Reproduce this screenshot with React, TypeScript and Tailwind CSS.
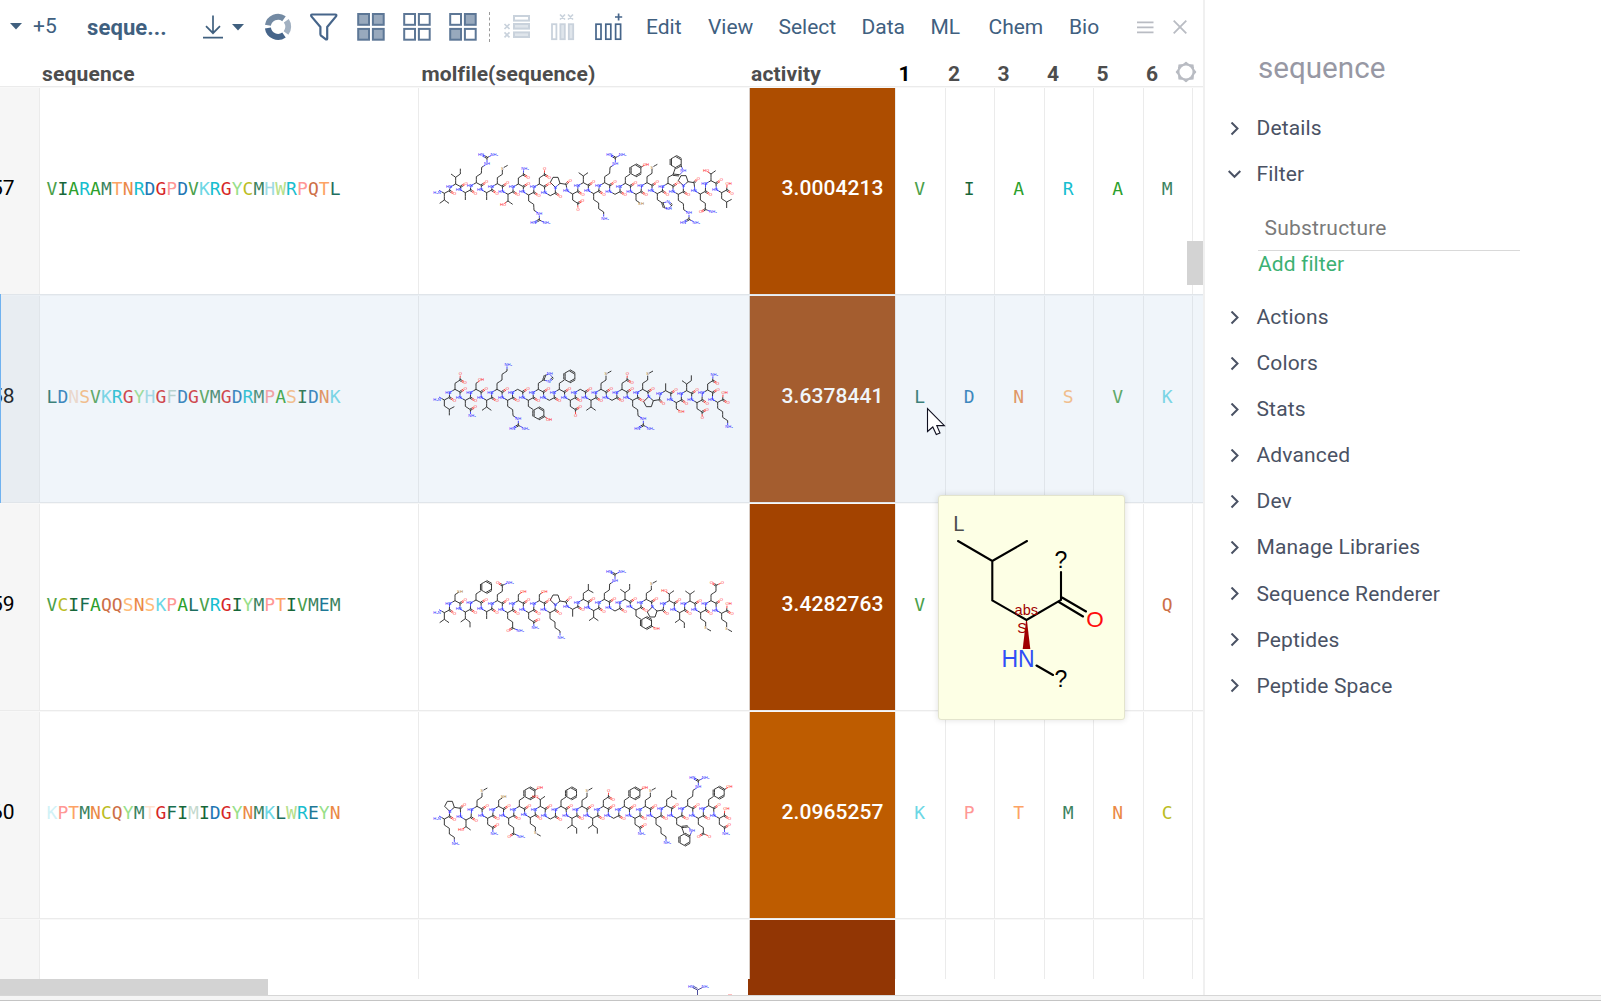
import React from "react";

const MONOMER_COLORS: Record<string, string> = {
  A: "#2ca02c", R: "#17becf", N: "#eb8946", D: "#1f77b4", C: "#bcbd22",
  Q: "#cd6f47", E: "#1f7896", G: "#d62728", H: "#9edae5", I: "#176739",
  L: "#1e6e60", K: "#6cd7e5", M: "#3c835f", F: "#186e4f", P: "#ff9896",
  S: "#ffbb78", T: "#fda364", W: "#b6df8a", Y: "#98df8a", V: "#4ba04a",
};

type Residue = [aa: string, x: number, y: number, up: 0 | 1];

type Row = {
  id: string;
  sequence: string;
  faded: number[];
  activity: string;
  fill: string;
  monomers: string;
  current?: boolean;
  offset: string;
  chain: Residue[];
};

/* Residues alternate below and above the backbone, starting below. */
function chain(seq: string, coords: [number, number][]): Residue[] {
  return coords.map(([x, y], i) => [seq[i], x, y, i % 2 ? 1 : 0]);
}

const ROWS: Row[] = [
  {
    id: "57", sequence: "VIARAMTNRDGPDVKRGYCMHWRPQTL", faded: [], activity: "3.0004213",
    fill: "bg-[#ad4d00]", monomers: "VIARAM", offset: "top-[52px]",
    chain: chain("VIARAMTNRDGPDVKRGYCMHWRPQTL", [
      [70, 160], [104, 132], [133, 158], [166, 128], [197, 158], [229, 131], [261, 163], [292, 132], [323, 165],
      [355, 132], [388, 167], [417, 130], [455, 162], [487, 128], [518, 161], [551, 128], [582, 163], [613, 130],
      [645, 163], [678, 128], [709, 161], [741, 130], [772, 163], [801, 125], [838, 162], [870, 122], [902, 158],
    ]),
  },
  {
    id: "58", sequence: "LDNSVKRGYHGFDGVMGDRMPASIDNK", faded: [2, 11], activity: "3.6378441",
    fill: "bg-[#a04202]", monomers: "LDNSVK", current: true, offset: "top-[54px]",
    chain: chain("LDNSVKRGYHGFDGVMGDRMPASIDNK", [
      [70, 150], [102, 118], [133, 151], [165, 118], [197, 151], [228, 118], [260, 151], [290, 118], [322, 151],
      [352, 118], [385, 151], [415, 118], [448, 151], [478, 118], [510, 151], [540, 118], [573, 151], [603, 118],
      [635, 151], [665, 118], [697, 152], [734, 122], [766, 158], [797, 122], [828, 158], [860, 120], [890, 157],
    ]),
  },
  {
    id: "59", sequence: "VCIFAQQSNSKPALVRGIYMPTIVMEM", faded: [], activity: "3.4282763",
    fill: "bg-[#a34300]", monomers: "V    Q", offset: "top-[56px]",
    chain: chain("VCIFAQQSNSKPALVRGIYMPTIVMEM", [
      [70, 158], [102, 122], [133, 156], [165, 120], [197, 155], [229, 122], [260, 158], [292, 122], [323, 158],
      [355, 122], [387, 158], [417, 123], [455, 148], [487, 118], [518, 152], [550, 118], [582, 153], [612, 118],
      [645, 150], [676, 118], [708, 153], [745, 122], [776, 158], [807, 123], [839, 158], [870, 122], [902, 160],
    ]),
  },
  {
    id: "60", sequence: "KPTMNCQYMTGFIMIDGYNMKLWREYN", faded: [0, 9, 13], activity: "2.0965257",
    fill: "bg-[#be5c00]", monomers: "KPTMNC", offset: "top-[53px]",
    chain: chain("KPTMNCQYMTGFIMIDGYNMKLWREYN", [
      [70, 162], [100, 127], [135, 165], [168, 124], [200, 160], [233, 124], [263, 160], [295, 124], [328, 158],
      [358, 124], [388, 162], [420, 124], [453, 160], [483, 124], [515, 160], [547, 124], [578, 160], [610, 124],
      [642, 160], [673, 124], [705, 160], [737, 122], [767, 160], [800, 122], [832, 160], [863, 122], [895, 160],
    ]),
  },
];

const BLACK = "#1a1a1a";
const BLUE = "#2a2aff";
const RED = "#ff2020";
const BROWN = "#a87830";

type Label = { at: number; text: string; color: string };
type SideChain = {
  pts: [number, number][];
  bonds: [number, number, 1 | 2][];
  labels?: Label[];
};

const STEM: [number, number][] = [[0, 0], [0, 18], [15, 28]];
const hexagon = (cx: number, cy: number): [number, number][] =>
  [-150, -90, -30, 30, 90, 150].map((a) => [
    cx + 18 * Math.cos((a * Math.PI) / 180),
    cy + 18 * Math.sin((a * Math.PI) / 180),
  ]);
const ring6 = (o: number): [number, number, 1 | 2][] => [
  [o, o + 1, 1], [o + 1, o + 2, 2], [o + 2, o + 3, 1], [o + 3, o + 4, 2], [o + 4, o + 5, 1], [o + 5, o, 2],
];

const acidic = (end: string, color: string): SideChain => ({
  pts: [...STEM, [30, 20], [16, 46]],
  bonds: [[0, 1, 1], [1, 2, 1], [2, 3, 2], [2, 4, 1]],
  labels: [{ at: 3, text: "O", color: RED }, { at: 4, text: end, color }],
});
const longAcid = (end: string, color: string): SideChain => ({
  pts: [...STEM, [15, 46], [1, 54], [34, 54]],
  bonds: [[0, 1, 1], [1, 2, 1], [2, 3, 1], [3, 4, 2], [3, 5, 1]],
  labels: [{ at: 4, text: "O", color: RED }, { at: 5, text: end, color }],
});

const SIDE: Record<string, SideChain> = {
  A: { pts: [[0, 0], [0, 22]], bonds: [[0, 1, 1]] },
  V: { pts: [[0, 0], [0, 20], [-14, 30], [14, 30]], bonds: [[0, 1, 1], [1, 2, 1], [1, 3, 1]] },
  I: {
    pts: [[0, 0], [0, 20], [-14, 30], [14, 30], [14, 46]],
    bonds: [[0, 1, 1], [1, 2, 1], [1, 3, 1], [3, 4, 1]],
  },
  L: { pts: [...STEM, [15, 46], [30, 20]], bonds: [[0, 1, 1], [1, 2, 1], [2, 3, 1], [2, 4, 1]] },
  K: {
    pts: [...STEM, [15, 45], [30, 55], [30, 74]],
    bonds: [[0, 1, 1], [1, 2, 1], [2, 3, 1], [3, 4, 1], [4, 5, 1]],
    labels: [{ at: 5, text: "NH₂", color: BLUE }],
  },
  R: {
    pts: [...STEM, [16, 46], [32, 56], [32, 75], [14, 84], [50, 84]],
    bonds: [[0, 1, 1], [1, 2, 1], [2, 3, 1], [3, 4, 1], [4, 5, 1], [5, 6, 2], [5, 7, 1]],
    labels: [
      { at: 4, text: "NH", color: BLUE }, { at: 6, text: "HN", color: BLUE }, { at: 7, text: "NH₂", color: BLUE },
    ],
  },
  M: {
    pts: [...STEM, [15, 46], [31, 55]],
    bonds: [[0, 1, 1], [1, 2, 1], [2, 3, 1], [3, 4, 1]],
    labels: [{ at: 3, text: "S", color: BROWN }],
  },
  T: {
    pts: [[0, 0], [0, 20], [-15, 30], [14, 30]],
    bonds: [[0, 1, 1], [1, 2, 1], [1, 3, 1]],
    labels: [{ at: 2, text: "HO", color: RED }],
  },
  S: { pts: STEM, bonds: [[0, 1, 1], [1, 2, 1]], labels: [{ at: 2, text: "OH", color: RED }] },
  C: { pts: STEM, bonds: [[0, 1, 1], [1, 2, 1]], labels: [{ at: 2, text: "SH", color: BROWN }] },
  D: acidic("O", RED),
  N: acidic("NH₂", BLUE),
  E: longAcid("O", RED),
  Q: longAcid("NH₂", BLUE),
  F: { pts: [...STEM, ...hexagon(31, 39)], bonds: [[0, 1, 1], [1, 2, 1], ...ring6(3)] },
  Y: {
    pts: [...STEM, ...hexagon(31, 39), [62, 57]],
    bonds: [[0, 1, 1], [1, 2, 1], ...ring6(3), [6, 9, 1]],
    labels: [{ at: 9, text: "OH", color: RED }],
  },
  H: {
    pts: [...STEM, [20, 42], [34, 46], [44, 34], [32, 24]],
    bonds: [[0, 1, 1], [1, 2, 1], [2, 3, 2], [3, 4, 1], [4, 5, 1], [5, 6, 2], [6, 2, 1]],
    labels: [{ at: 4, text: "NH", color: BLUE }, { at: 6, text: "N", color: BLUE }],
  },
  W: {
    pts: [[0, 0], [0, 18], [15, 26], [33, 24], [46, 37], [39, 54], [22, 46], ...hexagon(24, 64)],
    bonds: [[0, 1, 1], [1, 2, 1], [2, 3, 2], [3, 4, 1], [4, 5, 1], [6, 2, 1], ...ring6(7)],
    labels: [{ at: 4, text: "NH", color: BLUE }],
  },
  G: { pts: [], bonds: [] },
  P: { pts: [], bonds: [] },
};

function Peptide({ residues }: { residues: Residue[] }) {
  const dark: string[] = [];
  const blue: string[] = [];
  const red: string[] = [];
  const texts: { x: number; y: number; t: string; c: string }[] = [];
  const seg = (a: number[], b: number[], out = dark) => out.push(`M${a[0]} ${a[1]}L${b[0]} ${b[1]}`);
  const half = (a: number[], b: number[], ca: string[], cb: string[]) => {
    const m = [(a[0] + b[0]) / 2, (a[1] + b[1]) / 2];
    seg(a, m, ca);
    seg(m, b, cb);
  };
  const dbl = (a: number[], b: number[], ca = dark, cb = dark) => {
    const l = Math.hypot(b[0] - a[0], b[1] - a[1]);
    const o = [((b[1] - a[1]) / l) * 2, (-(b[0] - a[0]) / l) * 2];
    [1, -1].forEach((k) =>
      half([a[0] + o[0] * k, a[1] + o[1] * k], [b[0] + o[0] * k, b[1] + o[1] * k], ca, cb),
    );
  };
  const pick = (c?: string) => (c === BLUE ? blue : c === RED ? red : dark);

  let prev: number[] | null = null;
  residues.forEach(([aa, x, y, up], i) => {
    const s = up ? -1 : 1;
    const ca = [x, y];
    const pro = aa === "P";
    const n = pro ? [x - 14, y - s * 12] : [x - 16, y - s * 9];
    if (prev) half(prev, n, dark, blue);
    half(n, ca, blue, dark);
    if (i === 0) texts.push({ x: x - 22, y: y - 1, t: "H₂N", c: BLUE });
    else texts.push({ x: pro ? n[0] : n[0] - 4, y: n[1], t: pro ? "N" : "HN", c: BLUE });
    if (pro) {
      const ring = [n, [x - 29, y + s * 3], [x - 21, y + s * 18], [x - 6, y + s * 18], ca];
      ring.slice(1).forEach((p, k) => seg(ring[k], p));
    }
    const c = pro ? [x + 18, y - s * 3] : [x + 15, y - s * 8];
    const o = pro ? [x + 28, y + s * 7] : [x + 28, y];
    seg(ca, c);
    dbl(c, [o[0] - 2, o[1] - s], dark, red);
    texts.push({ x: o[0] + 3, y: o[1] + s * 2, t: "O", c: RED });
    if (i === residues.length - 1) {
      half(c, [c[0] + 1, c[1] - 15], dark, red);
      texts.push({ x: c[0] + 6, y: c[1] - 20, t: "OH", c: RED });
    }
    prev = c;

    const side = SIDE[aa];
    const P = side.pts.map(([px, py]) => [x + px, y + s * py]);
    const colorAt = (k: number) => side.labels?.find((l) => l.at === k)?.color;
    side.bonds.forEach(([a, b, order]) => {
      const trim = (k: number, other: number) =>
        colorAt(k) ? [P[k][0] + (P[other][0] - P[k][0]) * 0.28, P[k][1] + (P[other][1] - P[k][1]) * 0.28] : P[k];
      const pa = trim(a, b);
      const pb = trim(b, a);
      if (order === 2) dbl(pa, pb, pick(colorAt(a)), pick(colorAt(b)));
      else half(pa, pb, pick(colorAt(a)), pick(colorAt(b)));
    });
    side.labels?.forEach((l) => {
      const shift = l.text === "NH₂" ? 4 : 0;
      texts.push({ x: P[l.at][0] + shift, y: P[l.at][1], t: l.text, c: l.color });
    });
  });

  return (
    <svg viewBox="0 0 990 300" className="h-[100px] w-[330px]" fill="none" strokeWidth="2.6">
      <path d={dark.join("")} stroke={BLACK} />
      <path d={blue.join("")} stroke={BLUE} />
      <path d={red.join("")} stroke={RED} />
      <g fontFamily="Liberation Sans, sans-serif" fontSize="12.5" textAnchor="middle">
        {texts.map((t, i) => (
          <text key={i} x={t.x} y={t.y + 4} fill={t.c}>{t.t}</text>
        ))}
      </g>
    </svg>
  );
}

function GridRow({ row }: { row: Row }) {
  return (
    <div className="relative flex h-[208px] w-[1203px] shrink-0 border-t border-b border-t-[#f8f8f8] border-b-[#ebebeb]">
      <div className="flex w-[40px] shrink-0 justify-end overflow-hidden border-r border-[#ebebeb] bg-[#f6f6f6] pt-[84px] pr-[24.5px] text-[21px] leading-8 text-black">
        <span>{row.id}</span>
      </div>
      <div className="w-[379px] shrink-0 border-r border-[#ebebeb] pt-[84.5px] pl-[6.5px] font-['DejaVu_Sans_Mono',monospace] text-[18px] leading-8 tracking-[0.04px]">
        {row.sequence.split("").map((m, i) => (
          <span key={i} style={{ color: MONOMER_COLORS[m], opacity: row.faded.includes(i) ? 0.3 : 1 }}>{m}</span>
        ))}
      </div>
      <div className="relative w-[331px] shrink-0 border-r border-[#d8ccc4]">
        <div className={`absolute left-[1.5px] z-10 ${row.offset}`}>
          <Peptide residues={row.chain} />
        </div>
      </div>
      <div className={`w-[145px] shrink-0 pt-[84px] pr-[11.5px] text-right text-[21px] leading-8 font-medium tracking-[0.08px] text-white ${row.fill}`}>
        {row.activity}
      </div>
      <div className="w-px shrink-0 bg-[#ebebeb]" />
      {row.monomers.split("").map((m, i) => (
        <div key={i} className="w-[49.5px] shrink-0 border-r border-[#ebebeb] pt-[84.5px] pr-[1px] text-center font-['DejaVu_Sans_Mono',monospace] text-[18px] leading-8">
          <span style={{ color: MONOMER_COLORS[m] }}>{m}</span>
        </div>
      ))}
      {row.current && (
        <div className="absolute inset-x-0 -top-[2px] -bottom-px border-l border-[#6fb2f0] bg-[rgba(180,205,230,0.2)]" />
      )}
    </div>
  );
}

function TileIcon({ filled }: { filled: boolean[] }) {
  const pos = [[1, 1], [15.7, 1], [1, 15.9], [15.7, 15.9]];
  return (
    <svg width="28" height="28" viewBox="0 0 28 28" fill="none">
      {pos.map(([x, y], i) => (
        <rect key={i} x={x + 0.2} y={y} width="10.8" height="10.8" stroke="#5d7796" strokeWidth="2" fill={filled[i] ? "#98a9bd" : "#fff"} />
      ))}
    </svg>
  );
}

function Caret() {
  return (
    <svg width="12" height="7" viewBox="0 0 12 7"><path d="M0 0H12L6 6.6Z" fill="#40607f" /></svg>
  );
}

function Toolbar() {
  return (
    <div className="flex h-[54px] items-center text-[21px] text-[#40607f]">
      <div className="ml-[10px] flex w-[77px] items-center pb-[1px]">
        <Caret />
        <span className="ml-[11px]">+5</span>
      </div>
      <span className="w-[116px] text-[22px] font-bold tracking-[0.1px]">seque...</span>
      <svg width="20" height="24" viewBox="0 0 20 24" fill="none" stroke="#40607f" strokeWidth="1.7">
        <path d="M10 .5V18M3 11.2L10 18.2L17 11.2M0 22.6H20" />
      </svg>
      <div className="ml-[9px] w-[32px]"><Caret /></div>
      <svg width="28" height="28" viewBox="0 0 28 28" fill="none" strokeWidth="6">
        <path d="M3.9 12.3A10.3 10.3 0 0 1 20 5.7" stroke="#738aa3" />
        <path d="M22.3 7.8A10.3 10.3 0 0 1 22 20" stroke="#a1b0c1" />
        <path d="M3.9 15A10.3 10.3 0 0 0 20 22" stroke="#46658a" />
      </svg>
      <svg className="ml-[18px]" width="28" height="28" viewBox="0 0 28 28" fill="none" stroke="#46658a" strokeWidth="2.2" strokeLinejoin="round">
        <path d="M2.2 1.5H25.2Q27 1.5 26 3.4L17.2 14V25.5Q17 27 15.6 26.2L11 22.6Q10.4 22 10.4 21V14L1.4 3.4Q.6 1.5 2.2 1.5Z" />
      </svg>
      <div className="ml-[18.5px] flex gap-[18px]">
        <TileIcon filled={[true, true, true, true]} />
        <TileIcon filled={[false, false, false, false]} />
        <TileIcon filled={[false, true, true, false]} />
      </div>
      <div className="ml-[12px] h-[30px] border-l border-dashed border-[#9a9a9a]" />
      <svg className="ml-[13px]" width="28" height="28" viewBox="0 0 28 28" fill="none" stroke="#c9d2dc" strokeWidth="2">
        <rect x="11" y="3" width="15" height="4.6" />
        <rect x="11" y="11" width="15" height="4.6" fill="#dfe5eb" />
        <rect x="11" y="19.4" width="15" height="4.6" fill="#dfe5eb" />
        <path d="M1.5 11L6.5 16M6.5 11L1.5 16M1.5 19.4L6.5 24.4M6.5 19.4L1.5 24.4" strokeWidth="1.7" />
      </svg>
      <svg className="ml-[19px]" width="28" height="28" viewBox="0 0 28 28" fill="none" stroke="#c9d2dc" strokeWidth="1.8">
        <rect x="2" y="11.2" width="4.4" height="15" />
        <rect x="10.4" y="11.2" width="4.4" height="15" fill="#dfe5eb" />
        <rect x="18.8" y="11.2" width="4.4" height="15" fill="#dfe5eb" />
        <path d="M10 1.5L15 6.5M15 1.5L10 6.5M18 1.5L23 6.5M23 1.5L18 6.5" strokeWidth="1.7" />
      </svg>
      <svg className="ml-[17px]" width="28" height="28" viewBox="0 0 28 28" fill="none" stroke="#46658a" strokeWidth="1.7">
        <rect x="1" y="11.2" width="5" height="15" />
        <rect x="10.8" y="11.2" width="5" height="15" />
        <rect x="20.6" y="11.2" width="5" height="15" />
        <path d="M23.6 .5V7.5M20 4H27.2" />
      </svg>
      <div className="ml-[23.5px] grid grid-cols-[62px_70.5px_83px_69px_58px_80.5px_67.5px] pt-[2px] whitespace-nowrap">
        {["Edit", "View", "Select", "Data", "ML", "Chem", "Bio"].map((m) => <span key={m}>{m}</span>)}
      </div>
      <svg width="17" height="13" viewBox="0 0 17 13" stroke="#b9bcc3" strokeWidth="1.8"><path d="M0 1.3H16.5M0 6.3H16.5M0 11.3H16.5" /></svg>
      <svg className="ml-[19px]" width="14" height="14" viewBox="0 0 14 14" stroke="#b9bcc3" strokeWidth="1.8"><path d="M.7 .7L13.3 13.3M13.3 .7L.7 13.3" /></svg>
    </div>
  );
}

function HeaderRow() {
  return (
    <div className="flex h-[33px] w-[1203px] items-center border-b border-[#ebebeb] pt-[9px] text-[21px] font-bold text-[#4d4d4d]">
      <span className="ml-[42px] w-[379.5px] shrink-0 tracking-[0.2px]">sequence</span>
      <span className="w-[329.5px] shrink-0 tracking-[0.15px]">molfile(sequence)</span>
      <span className="w-[147.5px] shrink-0 tracking-[0.15px]">activity</span>
      <div className="flex">
        {["1", "2", "3", "4", "5", "6"].map((n) => (
          <span key={n} className={n === "1" ? "w-[49.5px] text-black" : "w-[49.5px]"}>{n}</span>
        ))}
      </div>
      <svg className="mb-[5px] -ml-[21px] shrink-0" width="22" height="22" viewBox="-11 -11 22 22" fill="none" stroke="#b9bcc3">
        <circle r="7.5" strokeWidth="2" />
        {[0, 45, 90, 135, 180, 225, 270, 315].map((a) => (
          <path key={a} d="M-2.6 -7.8L0 -10L2.6 -7.8Z" fill="#b9bcc3" strokeWidth="1" transform={`rotate(${a})`} />
        ))}
      </svg>
    </div>
  );
}

function MonomerTooltip() {
  return (
    <div className="absolute top-[495px] left-[938px] z-20 h-[225px] w-[187px] rounded-[3px] border border-[#e3e4cd] bg-[#fdffe5] shadow-[0_0_6px_rgba(0,0,0,0.13)]">
      <svg width="185" height="223" viewBox="939 496 185 223" fill="none" stroke="#000" strokeWidth="2.1" strokeLinecap="round" fontFamily="Liberation Sans, sans-serif">
        <path d="M958 541L992.3 561L1027 541M992.3 561V600.5L1026.5 620L1061 600V572M1062 597.5L1086 611.5M1058.8 602L1083 616.5M1036.5 665.5L1053 675" />
        <path d="M1026 621H1027L1030.3 649H1022.7Z" fill="#a00000" stroke="none" />
        <g stroke="none" textAnchor="middle">
          <text x="958.8" y="530.5" fontSize="20.5" fill="#4d4d4d" fontFamily="Roboto, sans-serif">L</text>
          <text x="1061" y="568" fontSize="23" fill="#000">?</text>
          <text x="1061" y="686.5" fontSize="23" fill="#000">?</text>
          <text x="1095" y="627" fontSize="22.5" fill="#ff0d0d">O</text>
          <text x="1018" y="667" fontSize="23" fill="#304ff7">HN</text>
          <text x="1026.3" y="615" fontSize="14.5" fill="#a00000">abs</text>
          <text x="1022" y="633" fontSize="14.5" fill="#a00000">S</text>
        </g>
      </svg>
    </div>
  );
}

function Section({ name, open }: { name: string; open?: boolean }) {
  return (
    <div className="flex h-[46.1px] items-center text-[21px] tracking-[0.15px] text-[#4a5264]">
      <svg width="14" height="14" viewBox="0 0 14 14" fill="none" stroke="#4a5264" strokeWidth="2">
        <path d={open ? "M.7 3L6.5 8.8L12.3 3" : "M3.5 .5L9.5 6.5L3.5 12.5"} />
      </svg>
      <span className="ml-[14.5px]">{name}</span>
    </div>
  );
}

export default function App() {
  return (
    <div className="relative h-[1001px] w-[1601px] overflow-hidden bg-white font-[Roboto,sans-serif]">
      <div className="flex h-[995px]">
        <div className="relative flex w-[1205px] shrink-0 flex-col overflow-hidden border-r-2 border-[#f0f0f0]">
          <Toolbar />
          <HeaderRow />
          {ROWS.map((r) => <GridRow key={r.id} row={r} />)}
          <div className="flex h-[60px] shrink-0 border-t border-[#f8f8f8]">
            <div className="w-[40px] shrink-0 border-r border-[#ebebeb] bg-[#f6f6f6]" />
            <div className="w-[379px] shrink-0 border-r border-[#ebebeb]" />
            <div className="w-[331px] shrink-0 border-r border-[#d8ccc4]" />
            <div className="w-[145px] shrink-0 bg-[#923604]" />
            <div className="w-px shrink-0 bg-[#ebebeb]" />
            {[0, 1, 2, 3, 4, 5].map((i) => <div key={i} className="w-[49.5px] shrink-0 border-r border-[#ebebeb]" />)}
          </div>
          <div className="flex h-4 shrink-0">
            <div className="w-[268px] bg-[#d3d3d3]" />
            <svg className="ml-[406px]" width="74" height="16" viewBox="674 979 74 16" fill="none" strokeWidth=".9">
              <path d="M697.5 990V995M692.5 987.5L697.5 990L702.5 987.5M693.5 986.3L697.5 988.4" stroke="#3a3a90" />
              <g fontFamily="Liberation Sans, sans-serif" fontSize="4" fill={BLUE}>
                <text x="688" y="988.4">HN</text>
                <text x="701.5" y="988.4">NH₂</text>
              </g>
              <path d="M728 994.6H732" stroke="#ffb0b0" />
            </svg>
            <div className="w-[147px] bg-[#923604]" />
          </div>
          <div className="absolute top-[241px] right-0 h-[44px] w-4 bg-[#d3d3d3]" />
        </div>
        <div className="flex flex-col pt-[51px] pl-[23px]">
          <h2 className="ml-[30px] h-[55px] text-[29.6px] leading-[35px] text-[#9798a4]">sequence</h2>
          <Section name="Details" />
          <Section name="Filter" open />
          <div className="mt-[6px] ml-[30px] flex h-[47px] w-[262px] items-center border-b border-[#d9d9d9] pt-[3px] pl-[6.5px] text-[21px] tracking-[0.2px] text-[#7a7a7a]">Substructure</div>
          <div className="ml-[30px] flex h-[43.5px] items-start text-[21px] leading-[26px] tracking-[0.1px] text-[#3cb173]">Add filter</div>
          {["Actions", "Colors", "Stats", "Advanced", "Dev", "Manage Libraries", "Sequence Renderer", "Peptides", "Peptide Space"].map((n) => (
            <Section key={n} name={n} />
          ))}
        </div>
      </div>
      <div className="h-[6px] border-t border-b border-t-[#d6d6d6] border-b-[#c4c4c4] bg-[#f5f5f5]" />
      <MonomerTooltip />
      <svg className="absolute top-[407px] left-[926px]" width="22" height="30" viewBox="0 0 22 30" fill="#fff" stroke="#101020" strokeWidth="1.1">
        <path d="M1.5 1.5V24.5L6.8 20L10.3 27.6L14 26L10.8 18.6H18.4Z" />
      </svg>
    </div>
  );
}
